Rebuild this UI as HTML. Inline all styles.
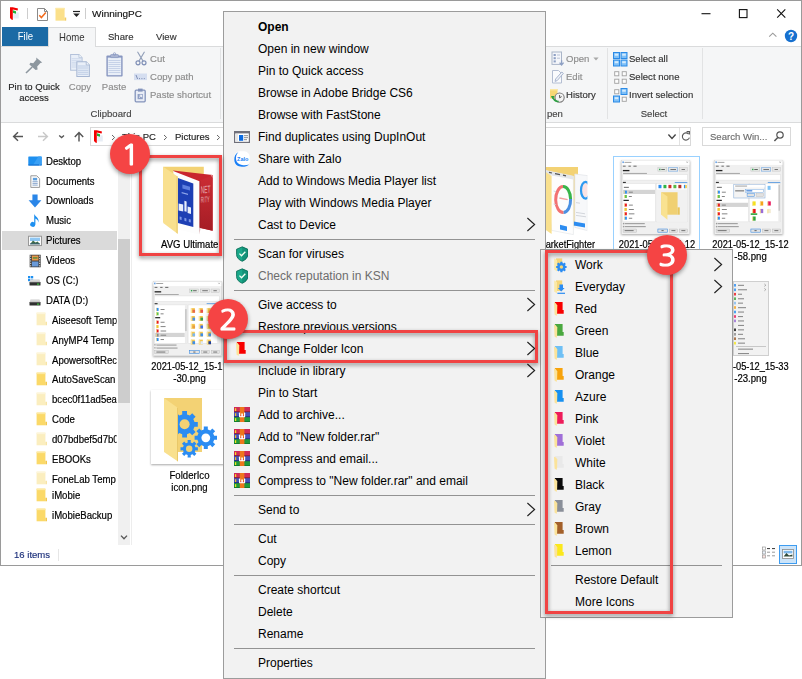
<!DOCTYPE html>
<html><head><meta charset="utf-8"><title>WinningPC</title>
<style>
*{box-sizing:border-box;margin:0;padding:0}
html,body{width:802px;height:679px;overflow:hidden;background:#fff}
body{position:relative;font-family:"Liberation Sans",sans-serif;font-size:9.6px;color:#222}
.abs{position:absolute}
.t{position:absolute;white-space:nowrap;line-height:12px;height:12px;margin-top:.1px;font-size:9.8px;transform:scaleX(.975);transform-origin:0 0;-webkit-text-stroke-width:.15px}
.c{transform-origin:50% 0 !important}
.fd{transform:scaleX(.893) !important}
.tab span{display:inline-block;font-size:10.4px;transform:scaleX(.923)}
.win{position:absolute;left:0;top:0;width:802px;height:566px;border:1px solid #9a9a9a;background:#fff}
.ribbon{position:absolute;left:1px;top:46px;width:800px;height:77px;background:#f5f6f7;border-top:1px solid #dadbdc;border-bottom:1px solid #dadbdc}
.filetab{position:absolute;left:2px;top:27px;width:46px;height:19px;background:#1b6aa5;color:#fff;text-align:center;line-height:20px;font-size:9.6px}
.hometab{position:absolute;left:48px;top:27px;width:48px;height:20px;background:#f5f6f7;border:1px solid #dadbdc;border-bottom:none;text-align:center;line-height:19px;font-size:9.6px;color:#333}
.gsep{position:absolute;top:48px;width:1px;height:71px;background:#e2e3e4}
.dis{color:#8c8c8c}
.menu{position:absolute;background:#f2f2f2;border:1px solid #9c9c9c;padding:4px 0;font-size:12px;color:#000}
.mi{position:relative;height:22px;line-height:23px;padding-left:34px;white-space:nowrap}
.ms{height:7px;position:relative}
.ms:after{content:"";position:absolute;left:10px;right:10px;top:3px;height:1px;background:#939393}
.mi svg.ic{position:absolute}
.mi .arr{position:absolute;right:9px;top:3px}
.sub .mi{padding-left:34px}
.sub .ms:after{left:10px;right:10px}
.rr{position:absolute;border:3px solid #f04343;filter:drop-shadow(0 2px 2px rgba(0,0,0,.45))}
.badge{position:absolute;width:40px;height:40px;border-radius:50%;background:#f54444;color:#fff;font-family:"NanumGothic","Liberation Sans",sans-serif;font-size:28px;line-height:42px;text-align:center;box-shadow:0 2px 4px rgba(0,0,0,.4);-webkit-text-stroke:1.2px #fff}
.badge span{display:inline-block;transform:scaleX(1.08)}
.sb{position:absolute;-webkit-text-stroke:.2px #000;left:46px;margin-top:1.1px;font-size:10.4px;color:#000;white-space:nowrap;line-height:12px;transform:scaleX(.923);transform-origin:0 0}
.sbf{position:absolute;-webkit-text-stroke:.2px #000;left:52px;margin-top:1.4px;font-size:10.4px;color:#000;white-space:nowrap;line-height:12px;width:70.4px;overflow:hidden;transform:scaleX(.923);transform-origin:0 0}
.fn{position:absolute;-webkit-text-stroke:.2px #000;margin-top:.6px;font-size:10.4px;color:#000;white-space:nowrap;line-height:12px;text-align:center;transform:scaleX(.923);transform-origin:50% 0}
</style></head>
<body>
<div class="win"></div>
<svg class="abs" style="left:9px;top:6px" width="12" height="15" viewBox="0 0 12 15">
<path d="M1 1.2 L3.8 1.2 L9 2.4 L8.6 4.4 L3.8 3.5 L3.8 13.9 L2.4 13.6 L1 12 Z" fill="#f30000"/>
<path d="M4 4.2 L7 5.3 L7 7.8 L4 6.9 Z" fill="#1fb33a"/>
<path d="M7.2 5.8 L9.8 6.8 L9.8 12.6 L4.2 12.4 L4.2 7.4 L7.2 8.2 Z" fill="#dfe7f1" opacity=".75"/>
</svg>
<div class="abs" style="left:27px;top:8px;width:1px;height:11px;background:#cdcdcd"></div>
<svg class="abs" style="left:36px;top:7px" width="13" height="15" viewBox="0 0 13 15">
<path d="M1.5 1.5 H8.5 L11.5 4.5 V13.5 H1.5 Z" fill="#fff" stroke="#8a8a8a" stroke-width="1"/>
<path d="M8.5 1.5 V4.5 H11.5" fill="none" stroke="#8a8a8a" stroke-width="1"/>
<path d="M3.3 8.2 L5.4 10.6 L9.8 5.6" fill="none" stroke="#f26a1b" stroke-width="1.5"/>
</svg>
<svg class="abs" style="left:55px;top:7px" width="12" height="15" viewBox="0 0 12 13.4" preserveAspectRatio="none">
<path d="M0.5 0.8 H9.6 V12.2 H0.5 Z" fill="#fbe08a"/>
<path d="M9.6 9.4 H11.2 V12.2 H9.6 Z" fill="#f3cd62"/>
<path d="M0.5 0.8 H9.6 V2 H0.5 Z" fill="#fde9a6"/>
</svg>
<svg class="abs" style="left:72px;top:10px" width="9" height="8" viewBox="0 0 9 8">
<path d="M1 1.5 H8" stroke="#222" stroke-width="1.2"/><path d="M1.2 3.6 H7.8 L4.5 7 Z" fill="#222"/></svg>
<div class="abs" style="left:85px;top:8px;width:1px;height:11px;background:#cdcdcd"></div>
<div class="t" style="left:92px;top:8px;color:#111;transform:scaleX(1.02)">WinningPC</div>
<svg class="abs" style="left:695px;top:5px" width="100" height="18" viewBox="0 0 100 18">
<path d="M6.5 8.7 H15.5" stroke="#111" stroke-width="1.1"/>
<rect x="44.4" y="4.6" width="7.6" height="8" fill="none" stroke="#111" stroke-width="1.1"/>
<path d="M82.2 4.3 L90.3 12.7 M90.3 4.3 L82.2 12.7" stroke="#111" stroke-width="1.1"/>
</svg>
<div class="ribbon"></div>
<div class="filetab tab"><span>File</span></div>
<div class="hometab tab"><span>Home</span></div>
<div class="t" style="left:108px;top:31px;color:#333">Share</div>
<div class="t" style="left:156px;top:31px;color:#333">View</div>
<svg class="abs" style="left:768px;top:31px" width="10" height="8" viewBox="0 0 10 8"><path d="M1.2 5.6 L4.8 2.2 L8.4 5.6" fill="none" stroke="#9a9a9a" stroke-width="1.1"/></svg>
<svg class="abs" style="left:784px;top:29px" width="14" height="14" viewBox="0 0 14 14"><circle cx="7" cy="7" r="6.2" fill="#1670cf"/>
<text x="7" y="10.6" font-family="Liberation Sans,sans-serif" font-size="10" font-weight="bold" fill="#fff" text-anchor="middle">?</text></svg>
<svg class="abs" style="left:24px;top:56px" width="20" height="19" viewBox="0 0 20 19">
<path d="M12.2 1.6 L18.2 6.4 L16.4 7 L13.2 10.6 L13.6 13.4 L11.6 14 L5.4 8.6 L6.4 6.8 L9.2 7.2 L12.4 3.6 Z" fill="#8d979f"/>
<path d="M8.2 11 L2 17" stroke="#8d979f" stroke-width="1.6"/></svg>
<div class="t c" style="left:0px;width:68px;top:81px;text-align:center;color:#1f1f1f">Pin to Quick</div>
<div class="t c" style="left:0px;width:68px;top:92px;text-align:center;color:#1f1f1f">access</div>
<svg class="abs" style="left:68.6px;top:52.8px" width="23" height="26" viewBox="0 0 22 25">
<path d="M1.5 1.5 H9.5 L12.5 4.5 V16.5 H1.5 Z" fill="#e9eff8" stroke="#b4c2da"/>
<path d="M9.5 1.5 V4.5 H12.5" fill="#f6f9fd" stroke="#b4c2da" stroke-width=".8"/>
<path d="M2.5 5.5 H11.5 M2.5 7.5 H11.5 M2.5 9.5 H11.5 M2.5 11.5 H11.5 M2.5 13.5 H11.5" stroke="#cbd7ea"/>
<path d="M7.5 8.5 H16.5 L19.5 11.5 V22.5 H7.5 Z" fill="#e9eff8" stroke="#a6b6d2"/>
<path d="M16.5 8.5 V11.5 H19.5" fill="#f6f9fd" stroke="#a6b6d2" stroke-width=".8"/>
<path d="M8.5 12.5 H18.5 M8.5 14.5 H18.5 M8.5 16.5 H18.5 M8.5 18.5 H18.5 M8.5 20.5 H18.5" stroke="#bccbe3"/>
</svg>
<div class="t c dis" style="left:60px;width:40px;top:81px;text-align:center">Copy</div>
<svg class="abs" style="left:105px;top:52px" width="19" height="26" viewBox="0 0 19 26">
<rect x="1.4" y="3.6" width="16.2" height="21" rx="1" fill="#8796c0"/>
<rect x="2.8" y="5.6" width="13.4" height="17.6" fill="#e9eff8"/>
<path d="M3.5 8.5 H15.5 M3.5 10.5 H15.5 M3.5 12.5 H15.5 M3.5 14.5 H15.5 M3.5 16.5 H15.5 M3.5 18.5 H15.5 M3.5 20.5 H15.5" stroke="#c6d2e8"/>
<rect x="5.6" y="2.6" width="7.8" height="3" rx=".6" fill="#aab5d2" stroke="#8796c0" stroke-width=".7"/>
<rect x="8.4" y="0.8" width="2.2" height="2.4" rx=".8" fill="none" stroke="#8796c0" stroke-width=".8"/>
</svg>
<div class="t c dis" style="left:94px;width:40px;top:81px;text-align:center">Paste</div>
<svg class="abs" style="left:135px;top:51px" width="12" height="15" viewBox="0 0 12 15">
<path d="M2.5 0.8 L8.2 10.4 M9.5 0.8 L3.8 10.4" stroke="#93a0b9" stroke-width="1.1" fill="none"/>
<circle cx="3" cy="11.8" r="2" fill="none" stroke="#7f8fb6" stroke-width="1.2"/><circle cx="9" cy="11.8" r="2" fill="none" stroke="#7f8fb6" stroke-width="1.2"/></svg>
<div class="t dis" style="left:150px;top:53px">Cut</div>
<svg class="abs" style="left:134px;top:73px" width="14" height="8" viewBox="0 0 14 8">
<rect x="0" y="0.5" width="13" height="6.6" fill="#d5def0"/><path d="M2 2 L3.6 6 M5 5.6 H6 M7.4 5.6 H8.4 M9.8 5.6 H10.8" stroke="#7f8fb6" stroke-width="1"/></svg>
<div class="t dis" style="left:150px;top:71px">Copy path</div>
<svg class="abs" style="left:134px;top:88px" width="13" height="15" viewBox="0 0 13 15">
<rect x="1.2" y="2.2" width="10" height="11.6" rx="1" fill="#e9edf6" stroke="#8393bb" stroke-width="1.3"/>
<rect x="4" y="0.6" width="4.6" height="3" fill="#8393bb"/>
<rect x="3.6" y="6" width="5.2" height="5.2" fill="#8f9fc4"/><path d="M5 9.6 L7.4 7.4 M5.6 7.2 H7.6 V9.2" stroke="#fff" stroke-width=".9" fill="none"/></svg>
<div class="t dis" style="left:150px;top:89px">Paste shortcut</div>
<div class="t c" style="left:2px;width:218px;text-align:center;top:108px;color:#444">Clipboard</div>
<div class="gsep" style="left:220px"></div>
<svg class="abs" style="left:551px;top:51px" width="14" height="16" viewBox="0 0 14 16">
<rect x="1" y="1" width="9.5" height="12.4" fill="#f4f6fa" stroke="#aab5c8"/>
<rect x="2.6" y="3" width="2.2" height="2" fill="#8ea0c4"/><rect x="2.6" y="6.2" width="2.2" height="2" fill="#8ea0c4"/><rect x="2.6" y="9.4" width="2.2" height="2" fill="#8ea0c4"/>
<path d="M6 4 H9 M6 7.2 H9" stroke="#b8c2d6"/>
<path d="M10.6 9.2 V13.2 M8.6 11.6 L10.6 14 L12.6 11.6" stroke="#8ea0c4" stroke-width="1.3" fill="none"/></svg>
<div class="t dis" style="left:566px;top:53px">Open</div>
<svg class="abs" style="left:593px;top:57px" width="6" height="4" viewBox="0 0 6 4"><path d="M0.4 0.4 H5.6 L3 3.4 Z" fill="#a8a8a8"/></svg>
<svg class="abs" style="left:551px;top:69px" width="14" height="16" viewBox="0 0 14 16">
<path d="M1.5 1.5 H7.5 L10.5 4.5 V14 H1.5 Z" fill="#fafbfd" stroke="#b4bed2"/>
<path d="M4 12.4 L4.6 10 L10.8 3 L12.4 4.4 L6.2 11.6 Z" fill="#eef1f7" stroke="#a2afc9" stroke-width=".9"/></svg>
<div class="t dis" style="left:566px;top:71px">Edit</div>
<svg class="abs" style="left:549px;top:87px" width="17" height="17" viewBox="0 0 17 17">
<path d="M1 2 H8.5 V11.5 H1 Z" fill="#f7d774"/><path d="M1 2 H8.5 V3.4 H1 Z" fill="#fbe7a1"/>
<circle cx="10.6" cy="10.6" r="4.6" fill="#f3f3f3" stroke="#7a7a7a" stroke-width="1.1"/>
<path d="M10.6 8 V10.8 L12.6 9.6" stroke="#555" stroke-width="1" fill="none"/>
<path d="M3.4 9.6 C5 13.6 8 14.6 9.6 14.4" stroke="#2ea043" stroke-width="1.6" fill="none"/><path d="M2 9 L5.6 9 L3.4 12 Z" fill="#2ea043"/></svg>
<div class="t" style="left:566px;top:89px;color:#333">History</div>
<div class="t" style="left:547px;top:108px;color:#444">pen</div>
<div class="gsep" style="left:607px"></div>
<svg class="abs" style="left:613px;top:52px" width="15" height="15" viewBox="0 0 15 15"><rect x="0.5" y="0.5" width="6" height="6" fill="#7fc0f7" stroke="#2b8ae6"/><rect x="1.7" y="1.7" width="3.6" height="2" fill="#d4ebfd"/><rect x="8" y="0.5" width="6" height="6" fill="#7fc0f7" stroke="#2b8ae6"/><rect x="9.2" y="1.7" width="3.6" height="2" fill="#d4ebfd"/><rect x="0.5" y="8" width="6" height="6" fill="#7fc0f7" stroke="#2b8ae6"/><rect x="1.7" y="9.2" width="3.6" height="2" fill="#d4ebfd"/><rect x="8" y="8" width="6" height="6" fill="#7fc0f7" stroke="#2b8ae6"/><rect x="9.2" y="9.2" width="3.6" height="2" fill="#d4ebfd"/></svg>
<div class="t" style="left:629px;top:53px;color:#333">Select all</div>
<svg class="abs" style="left:613px;top:70px" width="15" height="15" viewBox="0 0 15 15"><rect x="1.7" y="1.7" width="4.1" height="4.1" fill="#fdfdfd" stroke="#a0a0a0" stroke-width=".9"/><rect x="9.2" y="1.7" width="4.1" height="4.1" fill="#fdfdfd" stroke="#a0a0a0" stroke-width=".9"/><rect x="1.7" y="9.2" width="4.1" height="4.1" fill="#fdfdfd" stroke="#a0a0a0" stroke-width=".9"/><rect x="9.2" y="9.2" width="4.1" height="4.1" fill="#fdfdfd" stroke="#a0a0a0" stroke-width=".9"/></svg>
<div class="t" style="left:629px;top:71px;color:#333">Select none</div>
<svg class="abs" style="left:613px;top:88px" width="15" height="15" viewBox="0 0 15 15"><rect x="1.7" y="1.7" width="4.1" height="4.1" fill="#fdfdfd" stroke="#a0a0a0" stroke-width=".9"/><rect x="8" y="0.5" width="6" height="6" fill="#7fc0f7" stroke="#2b8ae6"/><rect x="9.2" y="1.7" width="3.6" height="2" fill="#d4ebfd"/><rect x="0.5" y="8" width="6" height="6" fill="#7fc0f7" stroke="#2b8ae6"/><rect x="1.7" y="9.2" width="3.6" height="2" fill="#d4ebfd"/><rect x="9.2" y="9.2" width="4.1" height="4.1" fill="#fdfdfd" stroke="#a0a0a0" stroke-width=".9"/></svg>
<div class="t" style="left:629px;top:89px;color:#333">Invert selection</div>
<div class="t c" style="left:624px;width:60px;text-align:center;top:108px;color:#444">Select</div>
<div class="gsep" style="left:702px"></div>
<svg class="abs" style="left:10px;top:129px" width="80" height="15" viewBox="0 0 80 15">
<path d="M4 7.5 H13 M8 3.2 L3.6 7.5 L8 11.8" fill="none" stroke="#555" stroke-width="1.45"/>
<path d="M28 7.5 H37 M33 3.2 L37.4 7.5 L33 11.8" fill="none" stroke="#c8c8c8" stroke-width="1.45"/>
<path d="M49.2 6.4 L51.6 8.6 L54 6.4" fill="none" stroke="#555" stroke-width="1.3"/>
<path d="M69 12.6 V3.8 M64.8 8 L69 3.6 L73.2 8" fill="none" stroke="#555" stroke-width="1.45"/>
</svg>
<div class="abs" style="left:90px;top:127px;width:601px;height:19px;border:1px solid #d9d9d9;background:#fff"></div>
<svg class="abs" style="left:93.4px;top:128.6px" width="12" height="15" viewBox="0 0 12 15">
<path d="M1 1.2 L3.8 1.2 L9 2.4 L8.6 4.4 L3.8 3.5 L3.8 13.9 L2.4 13.6 L1 12 Z" fill="#f30000"/>
<path d="M4 4.2 L7 5.3 L7 7.8 L4 6.9 Z" fill="#1fb33a"/>
<path d="M7.2 5.8 L9.8 6.8 L9.8 12.6 L4.2 12.4 L4.2 7.4 L7.2 8.2 Z" fill="#dfe7f1" opacity=".75"/>
</svg>
<svg class="abs" style="left:111px;top:134px" width="5" height="7" viewBox="0 0 5 7"><path d="M1 1 L3.6 3.5 L1 6" fill="none" stroke="#666" stroke-width="1"/></svg>
<div class="t" style="left:122px;top:131px;color:#222">This PC</div>
<svg class="abs" style="left:163px;top:134px" width="5" height="7" viewBox="0 0 5 7"><path d="M1 1 L3.6 3.5 L1 6" fill="none" stroke="#666" stroke-width="1"/></svg>
<div class="t" style="left:175px;top:131px;color:#222">Pictures</div>
<svg class="abs" style="left:216px;top:134px" width="5" height="7" viewBox="0 0 5 7"><path d="M1 1 L3.6 3.5 L1 6" fill="none" stroke="#666" stroke-width="1"/></svg>
<svg class="abs" style="left:667px;top:132px" width="10" height="9" viewBox="0 0 10 9"><path d="M1.4 2.6 L5 6.4 L8.6 2.6" fill="none" stroke="#444" stroke-width="1.4"/></svg>
<div class="abs" style="left:679px;top:128px;width:1px;height:17px;background:#e2e2e2"></div>
<svg class="abs" style="left:680px;top:130px" width="12" height="13" viewBox="0 0 12 13"><path d="M8.6 4 A3.6 3.6 0 1 0 9.4 7.6" fill="none" stroke="#555" stroke-width="1.1"/><path d="M6.6 1.6 H9.4 V4.6" fill="none" stroke="#555" stroke-width="1.1"/></svg>
<div class="abs" style="left:702px;top:127px;width:89px;height:19px;border:1px solid #d9d9d9;background:#fff"></div>
<div class="t" style="left:710px;top:131px;color:#6d6d6d">Search Win...</div>
<svg class="abs" style="left:773px;top:130px" width="12" height="13" viewBox="0 0 12 13"><circle cx="7" cy="5" r="3.2" fill="none" stroke="#555" stroke-width="1.2"/><path d="M4.8 7.4 L1.4 11" stroke="#555" stroke-width="1.5"/></svg>
<div class="abs" style="left:131px;top:147px;width:1px;height:398px;background:#ededed"></div>
<div class="abs" style="left:2px;top:231px;width:115px;height:19px;background:#dadada"></div>
<div class="abs" style="left:118px;top:147px;width:12px;height:398px;background:#f0f0f0"></div>
<div class="abs" style="left:118px;top:239px;width:12px;height:164px;background:#cdcdcd"></div>
<svg class="abs" style="left:120px;top:534px" width="8" height="7" viewBox="0 0 8 7"><path d="M1 1.6 L4 4.8 L7 1.6" fill="none" stroke="#555" stroke-width="1.3"/></svg>
<div class="sb" style="top:154.8px">Desktop</div>
<div class="sb" style="top:174.7px">Documents</div>
<div class="sb" style="top:194.3px">Downloads</div>
<div class="sb" style="top:214.0px">Music</div>
<div class="sb" style="top:234.1px">Pictures</div>
<div class="sb" style="top:254.1px">Videos</div>
<div class="sb" style="top:274.0px">OS (C:)</div>
<div class="sb" style="top:293.8px">DATA (D:)</div>
<svg class="abs" style="left:28px;top:156px" width="14" height="11" viewBox="0 0 14 11"><rect x="0.3" y="0.5" width="13.4" height="8.6" rx=".6" fill="#1e90f0"/><path d="M5 9 L10.4 0.5 H13.1 Q13.7 0.5 13.7 1.1 V9 Z" fill="#3aa0f5"/><rect x="0.3" y="8.2" width="13.4" height="1.6" rx=".5" fill="#1878d8"/><rect x="11" y="8.7" width="1.6" height=".7" fill="#9fd0fa"/></svg>
<svg class="abs" style="left:30px;top:174.6px" width="10.6" height="13.4" viewBox="0 0 11 14"><path d="M0.8 0.8 H7 L10 3.8 V13 H0.8 Z" fill="#fafafa" stroke="#8e8e8e" stroke-width=".9"/><rect x="3" y="3" width="4.4" height="2.6" fill="#5b9fe0"/><path d="M2.6 7 H8 M2.6 8.8 H8 M2.6 10.6 H8" stroke="#7a9cc8" stroke-width=".9"/></svg>
<svg class="abs" style="left:28px;top:194px" width="14" height="14" viewBox="0 0 14 14"><path d="M4.4 0.6 H9.6 V6.2 H13.4 L7 13.6 L0.6 6.2 H4.4 Z" fill="#2a86e8"/></svg>
<svg class="abs" style="left:30px;top:213px" width="11" height="15" viewBox="0 0 11 15"><path d="M4.2 0.8 C5 4 9.6 4.6 8.4 9.6 C8.4 6.6 6 6 5.4 5.4 V11.6 A2.6 2.4 0 1 1 4.2 9.4 Z" fill="#1e90f0"/></svg>
<svg class="abs" style="left:28px;top:235px" width="14" height="12" viewBox="0 0 14 12"><rect x="0.6" y="1.2" width="12.8" height="9.4" fill="#fff" stroke="#8a8a8a" stroke-width=".9"/><rect x="2" y="2.6" width="10" height="3.4" fill="#8fc7f3"/><path d="M2 9.2 L5 5.6 L7.6 7.6 L9.6 6.4 L12 9.2 Z" fill="#3d6a4a"/><rect x="2" y="8.4" width="10" height=".9" fill="#3b5d7a"/></svg>
<svg class="abs" style="left:29px;top:254px" width="12.4" height="14" viewBox="0 0 13 15"><rect x="0.6" y="0.8" width="11.8" height="13.4" fill="#3a3a3a"/><rect x="3" y="1.6" width="7" height="5.4" fill="#e8964a"/><rect x="3" y="8" width="7" height="5.4" fill="#6a9ad8"/><path d="M1.7 1.6 V13.6 M11.3 1.6 V13.6" stroke="#eee" stroke-width="1" stroke-dasharray="1.4 1.2"/><path d="M4 4.2 H9" stroke="#5a8f3c" stroke-width="1.6"/></svg>
<svg class="abs" style="left:28px;top:276px" width="6" height="6" viewBox="0 0 6 6"><rect x="0" y="0" width="2.3" height="2.3" fill="#1e90f0"/><rect x="2.9" y="0" width="2.3" height="2.3" fill="#1e90f0"/><rect x="0" y="2.9" width="2.3" height="2.3" fill="#1e90f0"/><rect x="2.9" y="2.9" width="2.3" height="2.3" fill="#1e90f0"/></svg>
<svg class="abs" style="left:29px;top:279.4px" width="12" height="7" viewBox="0 0 12 7"><path d="M1.6 0.4 H10.4 L11.4 3.4 H0.6 Z" fill="#c9c9c9"/><path d="M1.8 0.4 H10.2 L10.6 1.4 H1.4 Z" fill="#e6e6e6"/><rect x="0.5" y="3.2" width="11" height="3.3" rx=".5" fill="#303030"/><rect x="0.5" y="3.2" width="11" height=".8" fill="#5a5a5a"/><rect x="8" y="4.6" width="2.2" height="1" fill="#42e042"/></svg>
<svg class="abs" style="left:29px;top:299px" width="12" height="7" viewBox="0 0 12 7"><path d="M1.6 0.4 H10.4 L11.4 3.4 H0.6 Z" fill="#c9c9c9"/><path d="M1.8 0.4 H10.2 L10.6 1.4 H1.4 Z" fill="#e6e6e6"/><rect x="0.5" y="3.2" width="11" height="3.3" rx=".5" fill="#303030"/><rect x="0.5" y="3.2" width="11" height=".8" fill="#5a5a5a"/><rect x="8" y="4.6" width="2.2" height="1" fill="#42e042"/></svg>
<div class="sbf" style="top:313.5px">Aiseesoft Temp</div>
<svg class="abs" style="left:36px;top:312.4px" width="12" height="15" viewBox="0 0 12 14" preserveAspectRatio="none"><path d="M0.6 0.6 H9.4 V12.4 H0.6 Z" fill="#fbeebf"/><path d="M0.6 0.6 H9.4 V2 H0.6 Z" fill="#fdf5da"/><path d="M9.4 9.2 H11 V12.4 H9.4 Z" fill="#f7e4a6"/></svg>
<div class="sbf" style="top:333.4px">AnyMP4 Temp</div>
<svg class="abs" style="left:36px;top:332.3px" width="12" height="15" viewBox="0 0 12 14" preserveAspectRatio="none"><path d="M0.6 0.6 H9.4 V12.4 H0.6 Z" fill="#fbeebf"/><path d="M0.6 0.6 H9.4 V2 H0.6 Z" fill="#fdf5da"/><path d="M9.4 9.2 H11 V12.4 H9.4 Z" fill="#f7e4a6"/></svg>
<div class="sbf" style="top:353.2px">ApowersoftRec</div>
<svg class="abs" style="left:36px;top:352.1px" width="12" height="15" viewBox="0 0 12 14" preserveAspectRatio="none"><path d="M0.6 0.6 H9.4 V12.4 H0.6 Z" fill="#fbeebf"/><path d="M0.6 0.6 H9.4 V2 H0.6 Z" fill="#fdf5da"/><path d="M9.4 9.2 H11 V12.4 H9.4 Z" fill="#f7e4a6"/></svg>
<div class="sbf" style="top:372.9px">AutoSaveScan</div>
<svg class="abs" style="left:36px;top:371.8px" width="12" height="15" viewBox="0 0 12 14" preserveAspectRatio="none"><path d="M0.6 0.6 H9.4 V12.4 H0.6 Z" fill="#fbd968"/><path d="M0.6 0.6 H9.4 V2 H0.6 Z" fill="#fde9a0"/><path d="M9.4 9.2 H11 V12.4 H9.4 Z" fill="#f2c74e"/></svg>
<div class="sbf" style="top:392.8px">bcec0f11ad5ea</div>
<svg class="abs" style="left:36px;top:391.7px" width="12" height="15" viewBox="0 0 12 14" preserveAspectRatio="none"><path d="M0.6 0.6 H9.4 V12.4 H0.6 Z" fill="#fbeebf"/><path d="M0.6 0.6 H9.4 V2 H0.6 Z" fill="#fdf5da"/><path d="M9.4 9.2 H11 V12.4 H9.4 Z" fill="#f7e4a6"/></svg>
<div class="sbf" style="top:412.7px">Code</div>
<svg class="abs" style="left:36px;top:411.6px" width="12" height="15" viewBox="0 0 12 14" preserveAspectRatio="none"><path d="M0.6 0.6 H9.4 V12.4 H0.6 Z" fill="#fbd968"/><path d="M0.6 0.6 H9.4 V2 H0.6 Z" fill="#fde9a0"/><path d="M9.4 9.2 H11 V12.4 H9.4 Z" fill="#f2c74e"/></svg>
<div class="sbf" style="top:432.7px">d07bdbef5d7b0</div>
<svg class="abs" style="left:36px;top:431.6px" width="12" height="15" viewBox="0 0 12 14" preserveAspectRatio="none"><path d="M0.6 0.6 H9.4 V12.4 H0.6 Z" fill="#fbeebf"/><path d="M0.6 0.6 H9.4 V2 H0.6 Z" fill="#fdf5da"/><path d="M9.4 9.2 H11 V12.4 H9.4 Z" fill="#f7e4a6"/></svg>
<div class="sbf" style="top:452.4px">EBOOKs</div>
<svg class="abs" style="left:36px;top:451.3px" width="12" height="15" viewBox="0 0 12 14" preserveAspectRatio="none"><path d="M0.6 0.6 H9.4 V12.4 H0.6 Z" fill="#fbd968"/><path d="M0.6 0.6 H9.4 V2 H0.6 Z" fill="#fde9a0"/><path d="M9.4 9.2 H11 V12.4 H9.4 Z" fill="#f2c74e"/></svg>
<div class="sbf" style="top:472.3px">FoneLab Temp</div>
<svg class="abs" style="left:36px;top:471.2px" width="12" height="15" viewBox="0 0 12 14" preserveAspectRatio="none"><path d="M0.6 0.6 H9.4 V12.4 H0.6 Z" fill="#fbeebf"/><path d="M0.6 0.6 H9.4 V2 H0.6 Z" fill="#fdf5da"/><path d="M9.4 9.2 H11 V12.4 H9.4 Z" fill="#f7e4a6"/></svg>
<div class="sbf" style="top:489.0px">iMobie</div>
<svg class="abs" style="left:36px;top:487.9px" width="12" height="15" viewBox="0 0 12 14" preserveAspectRatio="none"><path d="M0.6 0.6 H9.4 V12.4 H0.6 Z" fill="#fbd968"/><path d="M0.6 0.6 H9.4 V2 H0.6 Z" fill="#fde9a0"/><path d="M9.4 9.2 H11 V12.4 H9.4 Z" fill="#f2c74e"/></svg>
<div class="sbf" style="top:508.9px">iMobieBackup</div>
<svg class="abs" style="left:36px;top:507.8px" width="12" height="15" viewBox="0 0 12 14" preserveAspectRatio="none"><path d="M0.6 0.6 H9.4 V12.4 H0.6 Z" fill="#fbd968"/><path d="M0.6 0.6 H9.4 V2 H0.6 Z" fill="#fde9a0"/><path d="M9.4 9.2 H11 V12.4 H9.4 Z" fill="#f2c74e"/></svg>
<div class="t" style="left:14px;top:549px;color:#1b2f7a">16 items</div>
<div class="abs" style="left:58px;top:549px;width:1px;height:12px;background:#e6e6e6"></div>
<svg class="abs" style="left:762px;top:546px" width="14" height="14" viewBox="0 0 14 14"><rect x="0.6" y="1" width="2.8" height="3" fill="#fff" stroke="#999" stroke-width=".7"/><rect x="0.6" y="5" width="2.8" height="3" fill="#eaf2fb" stroke="#999" stroke-width=".7"/><rect x="0.6" y="9" width="2.8" height="3" fill="#fbe3e0" stroke="#999" stroke-width=".7"/><path d="M5 2.6 H8 M10 2.6 H13" stroke="#333" stroke-width="1"/><path d="M5 6.2 H8 M10 6.2 H13 M5 9.8 H8 M10 9.8 H13" stroke="#9a9a9a" stroke-width="1"/></svg>
<div class="abs" style="left:779px;top:545px;width:18px;height:19px;border:1px solid #3e9cf0;background:#cce4f9"></div>
<svg class="abs" style="left:782px;top:549px" width="12" height="10" viewBox="0 0 12 10"><rect x="0.5" y="0.5" width="11" height="9" fill="#fff" stroke="#8a8a8a" stroke-width=".8"/><rect x="1.6" y="1.8" width="8.8" height="2.6" fill="#7fb8ea"/><path d="M1.6 7.6 L4.4 4 L7 6.4 L10.4 5.6 V7.6 Z" fill="#2f4a3a"/></svg>
<svg class="abs" style="left:160px;top:164px" width="56" height="74" viewBox="160 164 56 74">
<defs><linearGradient id="rg" x1="0" y1="0" x2="0" y2="1"><stop offset="0" stop-color="#cc2c34"/><stop offset="1" stop-color="#a51d25"/></linearGradient></defs>
<path d="M163.2 166.8 H203.8 V222 H163.2 Z" fill="#f3d274"/>
<path d="M173.2 170.4 L212.6 175 L212.6 230.7 L199.5 227.8 Z" fill="#c9252d"/>
<path d="M199.5 181 L212.6 175 L212.6 230.7 L199.5 227.8 Z" fill="url(#rg)"/>
<path d="M210.4 174.8 L212.6 175 L212.6 178 Z" fill="#e58a8e"/>
<g transform="translate(200.8 193.6) skewY(-6)" font-family="Liberation Sans,sans-serif" fill="#e6b0b3"><text x="0" y="0" font-size="10.4" textLength="9.6" lengthAdjust="spacingAndGlyphs">NET</text><text x="0" y="9.2" font-size="8.4" textLength="8.8" lengthAdjust="spacingAndGlyphs">RITY</text></g>
<path d="M173.2 171 L199.5 181.2 L199.5 234.6 L177.6 229.4 Z" fill="#fdfdfd"/>
<path d="M199.5 181.2 L200.4 181 L200.4 228 L199.5 234.6 Z" fill="#8e1a20" opacity=".5"/>
<path d="M177.9 178 L193.3 183.6 L193.3 227 L177.9 223 Z" fill="#1d3fb4"/>
<path d="M182.4 184.4 L190 186.8 L190 190.6 L182.4 188.4 Z" fill="#5f7fe0"/>
<path d="M181.6 192 L188 193.8 L188 195 L181.6 193.2 Z" fill="#8fa6ea"/>
<path d="M178.6 203.4 L183.2 204.6 L183.2 211.6 L178.6 210.4 Z M184.4 200.8 L186.6 201.4 L186.6 211.8 L184.4 211.2 Z M187.6 206.4 L191 207.4 L191 214 L187.6 213 Z" fill="#e8eefc"/>
<path d="M179.6 216.4 L181.6 217 L181.6 220 L179.6 219.4 Z M184.4 217.8 L186.4 218.4 L186.4 221.4 L184.4 220.8 Z M188.8 219 L190.8 219.6 L190.8 222.6 L188.8 222 Z" fill="#7f98e6"/>
<path d="M163.2 166.8 L177.6 176.6 L177.6 233.8 L163.2 223 Z" fill="#f9e08e"/>
<path d="M176.6 176 L177.6 176.6 L177.6 233.8 L176.6 233 Z" fill="#e9c869"/>
</svg>
<div class="fn" style="left:161px;top:238px;text-align:left;transform-origin:0 0">AVG Ultimate</div>
<svg class="abs" style="left:540px;top:164px" width="60" height="74" viewBox="540 164 60 74">
<path d="M540 167 H578 V226 H540 Z" fill="#f3d274"/>
<path d="M574.8 174 L587.4 175.6 L587.4 230.6 L574.8 227.4 Z" fill="#f7f8fa" stroke="#e1e4e8" stroke-width=".7"/>
<ellipse cx="585.6" cy="190.2" rx="4.6" ry="8.4" fill="#fbe3e3" stroke="#2e9af0" stroke-width="2.2"/>
<path d="M587.4 175.6 H592 V231 H587.4 Z" fill="#fff"/>
<path d="M576 202.6 L580 203.2 M576 212.4 L585 213.8 M576 215.4 L586 216.8" stroke="#c9cdd3" stroke-width=".8"/>
<path d="M573.6 221.6 L585 223.6 L585 227.6 L573.6 225.6 Z" fill="#2c8cf0"/>
<path d="M546 170.6 L573.4 176.2 L573.4 234.6 L551.6 230.4 Z" fill="#fdfdfd" stroke="#e4e6ea" stroke-width=".7"/>
<path d="M546 170.6 L573.4 176.2 L573.4 179.6 L546 174.4 Z" fill="#e3e6ea"/>
<path d="M549 172.4 L552 173 M555 173.6 L560 174.6 M563 175.2 L566 175.8" stroke="#555" stroke-width="1.2"/>
<path d="M563 186.6 A7.4 12.8 0 0 1 570.6 199" fill="none" stroke="#38b54a" stroke-width="3"/>
<path d="M570.6 199 A7.4 12.8 0 0 1 563.4 212.6" fill="none" stroke="#4a90e2" stroke-width="3"/>
<path d="M563.4 212.6 A7.4 12.8 0 0 1 563 186.6" fill="none" stroke="#f27272" stroke-width="3"/>
<path d="M559.4 198 L567.6 199.6" stroke="#f0a0a0" stroke-width="1.4"/>
<path d="M553.6 191 L556 191.6 M553.6 204 L556 204.6" stroke="#c9cdd3" stroke-width=".8"/>
<path d="M560 224.8 L567 226.4 L567 231 L560 229.4 Z" fill="#2c8cf0"/>
<path d="M540 168 L551.6 176 L551.6 234 L540 226 Z" fill="#f9e08e"/>
</svg>
<div class="fn" style="left:520.5px;top:238px;width:74px;text-align:right;transform-origin:100% 0;transform:scaleX(.89)">MarketFighter</div>
<div class="abs" style="left:613px;top:156px;width:87px;height:100px;border:1px solid #99d1ff;background:#fff"></div>
<svg class="abs" style="left:620.5px;top:159.6px;filter:drop-shadow(0.6px 1px 1px rgba(0,0,0,.35))" width="69.2" height="74.6" viewBox="0 0 69 75"><rect x="0" y="0" width="69" height="75" fill="#f0f0f0"/><rect x="0.25" y="0.25" width="68.5" height="74.5" fill="none" stroke="#cfcfcf" stroke-width=".5"/><rect x="0.5" y="0.5" width="68" height="4.4" fill="#fff"/><rect x="1.2" y="1.4" width="1.3" height="1.7" fill="#4a90e2"/><rect x="3.2" y="1.9" width="7" height=".9" fill="#9a9a9a"/><path d="M65.6 1.5 L67 2.9 M67 1.5 L65.6 2.9" stroke="#777" stroke-width=".4"/><rect x="1.6" y="5.7" width="2.8" height="1" fill="#666"/><rect x="7.2" y="5.7" width="2.4" height="1" fill="#666"/><rect x="12.2" y="5.7" width="3.2" height="1" fill="#666"/><rect x="1.6" y="10" width="6.6" height="1.3" fill="#222"/><rect x="36.8" y="7.8" width="9" height="3.4" fill="#e4e9e4" stroke="#bdbdbd" stroke-width=".4"/><rect x="38" y="8.8" width="1.4" height="1.4" fill="#2aa04a"/><rect x="40.2" y="9.1" width="3.6" height=".9" fill="#555"/><rect x="47.6" y="7.8" width="9.2" height="3.4" fill="#e6e6e6" stroke="#5a9be0" stroke-width=".5"/><rect x="49.4" y="9.1" width="5.6" height=".9" fill="#666"/><rect x="58.2" y="7.8" width="8.2" height="3.4" fill="#e6e6e6" stroke="#bdbdbd" stroke-width=".4"/><rect x="60.6" y="9.1" width="3.4" height=".9" fill="#666"/><rect x="1.8" y="13" width="24" height=".9" fill="#9c9c9c"/><rect x="1.6" y="14.8" width="64.8" height="5.4" fill="#fff" stroke="#dadada" stroke-width=".4"/><rect x="1.6" y="22" width="3" height="1.2" fill="#333"/><rect x="53.8" y="22.1" width="12.6" height=".9" fill="#5a9be0"/><rect x="1.6" y="23.8" width="32.6" height="38.4" fill="#fff" stroke="#dadada" stroke-width=".4"/><rect x="2.6" y="27.0" width="5" height=".9" fill="#555"/><rect x="1.8" y="30.0" width="32.2" height="4.2" fill="#d4d4d4"/><rect x="3.2" y="30.8" width="2.4" height="3" fill="#2a8cf0"/><rect x="3" y="31.0" width=".8" height="3" fill="#f5dc8a"/><rect x="7.6" y="31.900000000000002" width="4" height=".9" fill="#777"/><rect x="3.2" y="35.2" width="2.4" height="3" fill="#5fc24a"/><rect x="3" y="35.400000000000006" width=".8" height="3" fill="#f5dc8a"/><rect x="7.6" y="36.300000000000004" width="3" height=".9" fill="#777"/><rect x="2.2" y="40.0" width="5.4" height="1.2" fill="#222"/><rect x="3.2" y="43.8" width="2.4" height="3" fill="#e8131b"/><rect x="3" y="44.0" width=".8" height="3" fill="#f5dc8a"/><rect x="7.6" y="44.9" width="4" height=".9" fill="#777"/><rect x="3.2" y="48.2" width="2.4" height="3" fill="#f0c330"/><rect x="3" y="48.400000000000006" width=".8" height="3" fill="#f5dc8a"/><rect x="7.6" y="49.300000000000004" width="5" height=".9" fill="#777"/><rect x="3.2" y="52.6" width="2.4" height="3" fill="#e8131b"/><rect x="3" y="52.800000000000004" width=".8" height="3" fill="#f5dc8a"/><rect x="7.6" y="53.7" width="5.6" height=".9" fill="#777"/><rect x="3.2" y="57" width="2.4" height="3" fill="#2a8cf0"/><rect x="3" y="57.2" width=".8" height="3" fill="#f5dc8a"/><rect x="7.6" y="58.1" width="3.4" height=".9" fill="#777"/><rect x="35.2" y="23.8" width="31.2" height="38.4" fill="#fff" stroke="#dadada" stroke-width=".4"/><rect x="35.4" y="29.6" width="30.8" height="32.4" fill="#f1f1f1"/><rect x="37.4" y="25" width="3" height="3.4" fill="#2a8cf0"/><rect x="42.4" y="25" width="3" height="3.4" fill="#2fb344"/><rect x="47.4" y="25" width="3" height="3.4" fill="#d12b2b"/><rect x="52.4" y="25" width="3" height="3.4" fill="#58b947"/><rect x="57.4" y="25" width="3" height="3.4" fill="#b5332b"/><rect x="63" y="25" width="1.4" height="3.4" fill="#2a8cf0"/><rect x="64.4" y="25" width="1.4" height="3.4" fill="#f0c330"/><path d="M40.2 32.4 H56.6 V55 H40.2 Z" fill="#f0d072"/><path d="M56.6 47.6 H58.8 V55 H56.6 Z" fill="#e8c45c"/><path d="M40.2 32.4 L46.4 36.6 V60.2 L40.2 55 Z" fill="#f9e291"/><rect x="1.8" y="63.4" width="1.2" height="1.2" fill="#fff" stroke="#888" stroke-width=".3"/><rect x="3.6" y="63.6" width="20" height=".9" fill="#8a8a8a"/><rect x="1.8" y="66.4" width="1.2" height="1.2" fill="#fff" stroke="#888" stroke-width=".3"/><rect x="3.6" y="66.6" width="21" height=".9" fill="#8a8a8a"/><rect x="1.8" y="69.4" width="13.6" height="3.2" fill="#e3e3e3" stroke="#b5b5b5" stroke-width=".4"/><rect x="3.4" y="70.6" width="9" height=".9" fill="#666"/><rect x="36.8" y="69.4" width="9.6" height="3.2" fill="#e3e3e3" stroke="#3c8ae0" stroke-width=".6"/><rect x="40.4" y="70.6" width="2.2" height=".9" fill="#555"/><rect x="48.4" y="69.4" width="8" height="3.2" fill="#e3e3e3" stroke="#b5b5b5" stroke-width=".4"/><rect x="50.4" y="70.6" width="4" height=".9" fill="#666"/><rect x="58.4" y="69.4" width="8" height="3.2" fill="#e3e3e3" stroke="#b5b5b5" stroke-width=".4"/><rect x="60.4" y="70.6" width="4" height=".9" fill="#666"/></svg>
<div class="fn fd" style="left:607px;top:238px;width:100px">2021-05-12_15-12</div>
<svg class="abs" style="left:713.8px;top:159.6px;filter:drop-shadow(0.6px 1px 1px rgba(0,0,0,.35))" width="69.2" height="74.6" viewBox="0 0 69 75"><rect x="0" y="0" width="69" height="75" fill="#f0f0f0"/><rect x="0.25" y="0.25" width="68.5" height="74.5" fill="none" stroke="#cfcfcf" stroke-width=".5"/><rect x="0.5" y="0.5" width="68" height="4.4" fill="#fff"/><rect x="1.2" y="1.4" width="1.3" height="1.7" fill="#4a90e2"/><rect x="3.2" y="1.9" width="7" height=".9" fill="#9a9a9a"/><path d="M65.6 1.5 L67 2.9 M67 1.5 L65.6 2.9" stroke="#777" stroke-width=".4"/><rect x="1.6" y="5.7" width="2.8" height="1" fill="#666"/><rect x="7.2" y="5.7" width="2.4" height="1" fill="#666"/><rect x="12.2" y="5.7" width="3.2" height="1" fill="#666"/><rect x="1.6" y="10" width="6.6" height="1.3" fill="#222"/><rect x="36.8" y="7.8" width="9" height="3.4" fill="#e4e9e4" stroke="#bdbdbd" stroke-width=".4"/><rect x="38" y="8.8" width="1.4" height="1.4" fill="#2aa04a"/><rect x="40.2" y="9.1" width="3.6" height=".9" fill="#555"/><rect x="47.6" y="7.8" width="9.2" height="3.4" fill="#e6e6e6" stroke="#5a9be0" stroke-width=".5"/><rect x="49.4" y="9.1" width="5.6" height=".9" fill="#666"/><rect x="58.2" y="7.8" width="8.2" height="3.4" fill="#e6e6e6" stroke="#bdbdbd" stroke-width=".4"/><rect x="60.6" y="9.1" width="3.4" height=".9" fill="#666"/><rect x="1.8" y="13" width="24" height=".9" fill="#9c9c9c"/><rect x="1.6" y="14.8" width="64.8" height="5.4" fill="#fff" stroke="#dadada" stroke-width=".4"/><rect x="1.6" y="22" width="3" height="1.2" fill="#333"/><rect x="53.8" y="22.1" width="12.6" height=".9" fill="#5a9be0"/><rect x="1.6" y="23.8" width="32.6" height="38.4" fill="#fff" stroke="#dadada" stroke-width=".4"/><rect x="2.6" y="27.0" width="5" height=".9" fill="#555"/><rect x="3.2" y="30.8" width="2.4" height="3" fill="#2a8cf0"/><rect x="3" y="31.0" width=".8" height="3" fill="#f5dc8a"/><rect x="7.6" y="31.900000000000002" width="4" height=".9" fill="#777"/><rect x="3.2" y="35.2" width="2.4" height="3" fill="#5fc24a"/><rect x="3" y="35.400000000000006" width=".8" height="3" fill="#f5dc8a"/><rect x="7.6" y="36.300000000000004" width="3" height=".9" fill="#777"/><rect x="2.2" y="40.0" width="5.4" height="1.2" fill="#222"/><rect x="1.8" y="43.0" width="32.2" height="4.2" fill="#d4d4d4"/><rect x="3.2" y="43.8" width="2.4" height="3" fill="#e8131b"/><rect x="3" y="44.0" width=".8" height="3" fill="#f5dc8a"/><rect x="7.6" y="44.9" width="4" height=".9" fill="#777"/><rect x="3.2" y="48.2" width="2.4" height="3" fill="#f0c330"/><rect x="3" y="48.400000000000006" width=".8" height="3" fill="#f5dc8a"/><rect x="7.6" y="49.300000000000004" width="5" height=".9" fill="#777"/><rect x="3.2" y="52.6" width="2.4" height="3" fill="#e8131b"/><rect x="3" y="52.800000000000004" width=".8" height="3" fill="#f5dc8a"/><rect x="7.6" y="53.7" width="5.6" height=".9" fill="#777"/><rect x="3.2" y="57" width="2.4" height="3" fill="#2a8cf0"/><rect x="3" y="57.2" width=".8" height="3" fill="#f5dc8a"/><rect x="7.6" y="58.1" width="3.4" height=".9" fill="#777"/><rect x="35.2" y="23.8" width="31.2" height="38.4" fill="#fff" stroke="#dadada" stroke-width=".4"/><rect x="64.4" y="24" width="1.8" height="38" fill="#ececec"/><rect x="64.6" y="25" width="1.4" height="26" fill="#c6c6c6"/><rect x="19.6" y="24.6" width="31.4" height="13.6" fill="#f4f4f4" stroke="#8fb0d8" stroke-width=".6"/><rect x="20" y="25" width="30.6" height="2.6" fill="#fff"/><rect x="21" y="25.8" width="12" height=".8" fill="#888"/><rect x="21" y="30.6" width="9" height=".9" fill="#555"/><rect x="31.6" y="29.6" width="17.6" height="2.8" fill="#fff" stroke="#5a9be0" stroke-width=".4"/><rect x="32.2" y="30.4" width="6" height="1.2" fill="#3c7fd8"/><rect x="33" y="33.8" width="7.4" height="3" fill="#e1e1e1" stroke="#3c8ae0" stroke-width=".5"/><rect x="42" y="33.8" width="7.4" height="3" fill="#e1e1e1" stroke="#b5b5b5" stroke-width=".4"/><rect x="53.6" y="26" width="3" height="4" fill="#7fc3f5"/><rect x="38.6" y="41.6" width="3" height="4.2" fill="#f5e11c"/><rect x="38.2" y="41.9" width=".9" height="4.2" fill="#f5dc8a"/><rect x="46.2" y="41.6" width="3" height="4.2" fill="#f5a51c"/><rect x="45.800000000000004" y="41.9" width=".9" height="4.2" fill="#f5dc8a"/><rect x="53.8" y="41.6" width="3" height="4.2" fill="#e8135a"/><rect x="53.400000000000006" y="41.9" width=".9" height="4.2" fill="#f5dc8a"/><rect x="38.6" y="49.2" width="3" height="4.2" fill="#e8131b"/><rect x="38.2" y="49.5" width=".9" height="4.2" fill="#f5dc8a"/><rect x="46.2" y="49.2" width="3" height="4.2" fill="#9a6cd6"/><rect x="45.800000000000004" y="49.5" width=".9" height="4.2" fill="#f5dc8a"/><rect x="53.8" y="49.2" width="3" height="4.2" fill="#f2ead0"/><rect x="53.400000000000006" y="49.5" width=".9" height="4.2" fill="#f5dc8a"/><rect x="38.6" y="56.8" width="3" height="4.2" fill="#2fa33a"/><rect x="38.2" y="57.099999999999994" width=".9" height="4.2" fill="#f5dc8a"/><rect x="36.6" y="53.6" width="6.6" height="1.6" fill="#2fa33a"/><rect x="1.8" y="63.4" width="1.2" height="1.2" fill="#fff" stroke="#888" stroke-width=".3"/><rect x="3.6" y="63.6" width="20" height=".9" fill="#8a8a8a"/><rect x="1.8" y="66.4" width="1.2" height="1.2" fill="#fff" stroke="#888" stroke-width=".3"/><rect x="3.6" y="66.6" width="21" height=".9" fill="#8a8a8a"/><rect x="1.8" y="69.4" width="13.6" height="3.2" fill="#e3e3e3" stroke="#b5b5b5" stroke-width=".4"/><rect x="3.4" y="70.6" width="9" height=".9" fill="#666"/><rect x="36.8" y="69.4" width="9.6" height="3.2" fill="#e3e3e3" stroke="#3c8ae0" stroke-width=".6"/><rect x="40.4" y="70.6" width="2.2" height=".9" fill="#555"/><rect x="48.4" y="69.4" width="8" height="3.2" fill="#e3e3e3" stroke="#b5b5b5" stroke-width=".4"/><rect x="50.4" y="70.6" width="4" height=".9" fill="#666"/><rect x="58.4" y="69.4" width="8" height="3.2" fill="#e3e3e3" stroke="#b5b5b5" stroke-width=".4"/><rect x="60.4" y="70.6" width="4" height=".9" fill="#666"/></svg>
<div class="fn fd" style="left:700px;top:238px;width:101px">2021-05-12_15-12</div>
<div class="fn" style="left:710px;top:250px;width:81px">-58.png</div>
<svg class="abs" style="left:153.2px;top:281.2px;filter:drop-shadow(0.6px 1px 1px rgba(0,0,0,.35))" width="68.8" height="75.2" viewBox="0 0 69 75"><rect x="0" y="0" width="69" height="75" fill="#f0f0f0"/><rect x="0.25" y="0.25" width="68.5" height="74.5" fill="none" stroke="#cfcfcf" stroke-width=".5"/><rect x="0.5" y="0.5" width="68" height="4.4" fill="#fff"/><rect x="1.2" y="1.4" width="1.3" height="1.7" fill="#4a90e2"/><rect x="3.2" y="1.9" width="7" height=".9" fill="#9a9a9a"/><path d="M65.6 1.5 L67 2.9 M67 1.5 L65.6 2.9" stroke="#777" stroke-width=".4"/><rect x="1.6" y="5.7" width="2.8" height="1" fill="#666"/><rect x="7.2" y="5.7" width="2.4" height="1" fill="#666"/><rect x="12.2" y="5.7" width="3.2" height="1" fill="#666"/><rect x="1.6" y="10" width="6.6" height="1.3" fill="#222"/><rect x="36.8" y="7.8" width="9" height="3.4" fill="#e4e9e4" stroke="#bdbdbd" stroke-width=".4"/><rect x="38" y="8.8" width="1.4" height="1.4" fill="#2aa04a"/><rect x="40.2" y="9.1" width="3.6" height=".9" fill="#555"/><rect x="47.6" y="7.8" width="9.2" height="3.4" fill="#e6e6e6" stroke="#bdbdbd" stroke-width=".5"/><rect x="49.4" y="9.1" width="5.6" height=".9" fill="#666"/><rect x="58.2" y="7.8" width="8.2" height="3.4" fill="#e6e6e6" stroke="#bdbdbd" stroke-width=".4"/><rect x="60.6" y="9.1" width="3.4" height=".9" fill="#666"/><rect x="1.8" y="13" width="24" height=".9" fill="#9c9c9c"/><rect x="1.6" y="14.8" width="64.8" height="5.4" fill="#fff" stroke="#dadada" stroke-width=".4"/><rect x="1.6" y="22" width="3" height="1.2" fill="#333"/><rect x="53.8" y="22.1" width="12.6" height=".9" fill="#5a9be0"/><rect x="1.6" y="23.8" width="32.6" height="38.4" fill="#fff" stroke="#dadada" stroke-width=".4"/><rect x="32" y="24" width="2" height="38" fill="#ececec"/><rect x="32.2" y="28" width="1.6" height="22" fill="#c6c6c6"/><rect x="3.2" y="26.8" width="2.4" height="3" fill="#2a8cf0"/><rect x="3" y="27.0" width=".8" height="3" fill="#f5dc8a"/><rect x="7.6" y="27.900000000000002" width="4" height=".9" fill="#777"/><rect x="3.2" y="31.2" width="2.4" height="3" fill="#5fc24a"/><rect x="3" y="31.4" width=".8" height="3" fill="#f5dc8a"/><rect x="7.6" y="32.3" width="3" height=".9" fill="#777"/><rect x="2.2" y="36.0" width="5" height="1.2" fill="#222"/><rect x="3.2" y="39.6" width="2.4" height="3" fill="#e8131b"/><rect x="3" y="39.800000000000004" width=".8" height="3" fill="#f5dc8a"/><rect x="7.6" y="40.7" width="4" height=".9" fill="#777"/><rect x="3.2" y="44" width="2.4" height="3" fill="#f0c330"/><rect x="3" y="44.2" width=".8" height="3" fill="#f5dc8a"/><rect x="7.6" y="45.1" width="5" height=".9" fill="#777"/><rect x="3.2" y="48.4" width="2.4" height="3" fill="#e8131b"/><rect x="3" y="48.6" width=".8" height="3" fill="#f5dc8a"/><rect x="7.6" y="49.5" width="5.6" height=".9" fill="#777"/><rect x="1.8" y="51.800000000000004" width="30" height="4.2" fill="#d4d4d4"/><rect x="3.2" y="52.6" width="2.4" height="3" fill="#8a8a8a"/><rect x="3" y="52.800000000000004" width=".8" height="3" fill="#f5dc8a"/><rect x="7.6" y="53.7" width="5.6" height=".9" fill="#777"/><rect x="3.2" y="57" width="2.4" height="3" fill="#2a8cf0"/><rect x="3" y="57.2" width=".8" height="3" fill="#f5dc8a"/><rect x="7.6" y="58.1" width="3.4" height=".9" fill="#777"/><rect x="35.2" y="23.8" width="31.2" height="38.4" fill="#fff" stroke="#dadada" stroke-width=".4"/><rect x="38" y="27.0" width="4" height="4.8" fill="#f5c64c"/><rect x="38" y="27.0" width="1.2" height="4.8" fill="#fae39a"/><rect x="39.6" y="28.6" width="2.6" height="3" fill="#e86a4a"/><rect x="46" y="27.0" width="4" height="4.8" fill="#f5c64c"/><rect x="46" y="27.0" width="1.2" height="4.8" fill="#fae39a"/><rect x="47.6" y="28.6" width="2.6" height="3" fill="#e8504a"/><rect x="54" y="27.0" width="4" height="4.8" fill="#f5c64c"/><rect x="54" y="27.0" width="1.2" height="4.8" fill="#fae39a"/><rect x="55.6" y="28.6" width="2.6" height="3" fill="#f0b440"/><rect x="38" y="34.9" width="4" height="4.8" fill="#f5c64c"/><rect x="38" y="34.9" width="1.2" height="4.8" fill="#fae39a"/><rect x="39.6" y="36.5" width="2.6" height="3" fill="#4a90e2"/><rect x="46" y="34.9" width="4" height="4.8" fill="#f5c64c"/><rect x="46" y="34.9" width="1.2" height="4.8" fill="#fae39a"/><rect x="47.6" y="36.5" width="2.6" height="3" fill="#3a9a4a"/><rect x="54" y="34.9" width="4" height="4.8" fill="#f5c64c"/><rect x="54" y="34.9" width="1.2" height="4.8" fill="#fae39a"/><rect x="55.6" y="36.5" width="2.6" height="3" fill="#f0b440"/><rect x="38" y="42.8" width="4" height="4.8" fill="#f5c64c"/><rect x="38" y="42.8" width="1.2" height="4.8" fill="#fae39a"/><rect x="39.6" y="44.4" width="2.6" height="3" fill="#e8a040"/><rect x="46" y="42.8" width="4" height="4.8" fill="#f5c64c"/><rect x="46" y="42.8" width="1.2" height="4.8" fill="#fae39a"/><rect x="47.6" y="44.4" width="2.6" height="3" fill="#3f6fe8"/><rect x="54" y="42.8" width="4" height="4.8" fill="#f5c64c"/><rect x="54" y="42.8" width="1.2" height="4.8" fill="#fae39a"/><rect x="55.6" y="44.4" width="2.6" height="3" fill="#f0b440"/><rect x="38" y="50.7" width="4" height="4.8" fill="#f5c64c"/><rect x="38" y="50.7" width="1.2" height="4.8" fill="#fae39a"/><rect x="39.6" y="52.3" width="2.6" height="3" fill="#7ab8f0"/><rect x="46" y="50.7" width="4" height="4.8" fill="#f5c64c"/><rect x="46" y="50.7" width="1.2" height="4.8" fill="#fae39a"/><rect x="47.6" y="52.3" width="2.6" height="3" fill="#3f8fe8"/><rect x="54" y="50.7" width="4" height="4.8" fill="#f5c64c"/><rect x="54" y="50.7" width="1.2" height="4.8" fill="#fae39a"/><rect x="55.6" y="52.3" width="2.6" height="3" fill="#4a90e2"/><rect x="38" y="58.6" width="4" height="4.8" fill="#f5c64c"/><rect x="38" y="58.6" width="1.2" height="4.8" fill="#fae39a"/><rect x="39.6" y="60.2" width="2.6" height="3" fill="#3f8fe8"/><rect x="46" y="58.6" width="4" height="4.8" fill="#f5c64c"/><rect x="46" y="58.6" width="1.2" height="4.8" fill="#fae39a"/><rect x="47.6" y="60.2" width="2.6" height="3" fill="#dfeaf6"/><rect x="54" y="58.6" width="4" height="4.8" fill="#f5c64c"/><rect x="54" y="58.6" width="1.2" height="4.8" fill="#fae39a"/><rect x="55.6" y="60.2" width="2.6" height="3" fill="#1f3f9a"/><rect x="64.4" y="24" width="1.8" height="38" fill="#ececec"/><rect x="1.8" y="63.4" width="1.2" height="1.2" fill="#fff" stroke="#888" stroke-width=".3"/><rect x="3.6" y="63.6" width="20" height=".9" fill="#8a8a8a"/><rect x="1.8" y="66.4" width="1.2" height="1.2" fill="#fff" stroke="#888" stroke-width=".3"/><rect x="3.6" y="66.6" width="21" height=".9" fill="#8a8a8a"/><rect x="1.8" y="69.4" width="13.6" height="3.2" fill="#e3e3e3" stroke="#b5b5b5" stroke-width=".4"/><rect x="3.4" y="70.6" width="9" height=".9" fill="#666"/><rect x="36.8" y="69.4" width="9.6" height="3.2" fill="#e3e3e3" stroke="#3c8ae0" stroke-width=".6"/><rect x="40.4" y="70.6" width="2.2" height=".9" fill="#555"/><rect x="48.4" y="69.4" width="8" height="3.2" fill="#e3e3e3" stroke="#b5b5b5" stroke-width=".4"/><rect x="50.4" y="70.6" width="4" height=".9" fill="#666"/><rect x="58.4" y="69.4" width="8" height="3.2" fill="#e3e3e3" stroke="#b5b5b5" stroke-width=".4"/><rect x="60.4" y="70.6" width="4" height=".9" fill="#666"/></svg>
<div class="fn fd" style="left:139.4px;top:360px;width:101px">2021-05-12_15-12</div>
<div class="fn" style="left:149px;top:372px;width:81px">-30.png</div>
<svg class="abs" style="left:733px;top:281px" width="36" height="75" viewBox="0 0 36 75"><rect x="0.5" y="0.5" width="35" height="74" fill="#f2f2f2" stroke="#cfcfcf"/><rect x="1.2" y="3.0" width="1.6" height="2.6" fill="#2a8cf0"/><rect x="5" y="3.8" width="6" height="1.1" fill="#8c8c8c"/><rect x="1.2" y="7.5" width="1.6" height="2.6" fill="#2a8cf0"/><rect x="5" y="8.2" width="9" height="1.1" fill="#8c8c8c"/><rect x="1.2" y="11.9" width="1.6" height="2.6" fill="#e8131b"/><rect x="5" y="12.7" width="4" height="1.1" fill="#8c8c8c"/><rect x="1.2" y="16.4" width="1.6" height="2.6" fill="#3aa53a"/><rect x="5" y="17.2" width="6" height="1.1" fill="#8c8c8c"/><rect x="1.2" y="20.8" width="1.6" height="2.6" fill="#7db8f0"/><rect x="5" y="21.6" width="5" height="1.1" fill="#8c8c8c"/><rect x="1.2" y="25.2" width="1.6" height="2.6" fill="#f5a21c"/><rect x="5" y="26.1" width="8" height="1.1" fill="#8c8c8c"/><rect x="1.2" y="29.7" width="1.6" height="2.6" fill="#1e90f0"/><rect x="5" y="30.5" width="6" height="1.1" fill="#8c8c8c"/><rect x="1.2" y="34.2" width="1.6" height="2.6" fill="#e8135a"/><rect x="5" y="35.0" width="5" height="1.1" fill="#8c8c8c"/><rect x="1.2" y="38.6" width="1.6" height="2.6" fill="#9a6cd6"/><rect x="5" y="39.4" width="6" height="1.1" fill="#8c8c8c"/><rect x="1.2" y="43.1" width="1.6" height="2.6" fill="#eeeeee"/><rect x="5" y="43.9" width="6" height="1.1" fill="#8c8c8c"/><rect x="1.2" y="47.5" width="1.6" height="2.6" fill="#111"/><rect x="5" y="48.3" width="6" height="1.1" fill="#8c8c8c"/><rect x="1.2" y="52.0" width="1.6" height="2.6" fill="#8a8a8a"/><rect x="5" y="52.8" width="5" height="1.1" fill="#8c8c8c"/><rect x="1.2" y="56.4" width="1.6" height="2.6" fill="#9a5a2a"/><rect x="5" y="57.2" width="7" height="1.1" fill="#8c8c8c"/><rect x="1.2" y="60.9" width="1.6" height="2.6" fill="#f5e61c"/><rect x="5" y="61.6" width="7" height="1.1" fill="#8c8c8c"/><path d="M31.4 3 L32.8 4.2 L31.4 5.4 M31.4 7.4 L32.8 8.6 L31.4 9.8" stroke="#777" stroke-width=".6" fill="none"/><rect x="3" y="65" width="30" height=".6" fill="#aaa"/><rect x="5" y="67.6" width="15" height="1.1" fill="#8c8c8c"/><rect x="5" y="72" width="11" height="1.1" fill="#8c8c8c"/></svg>
<div class="fn fd" style="left:700px;top:360px;width:101px">2021-05-12_15-33</div>
<div class="fn" style="left:710px;top:372px;width:81px">-23.png</div>
<div class="abs" style="left:151px;top:390px;width:80px;height:74px;background:#fff;box-shadow:0 1px 2px rgba(0,0,0,.35)"></div>
<svg class="abs" style="left:160px;top:394px" width="62" height="70" viewBox="160 394 62 70"><path d="M164 398 H202 V452 H164 Z" fill="#f3d274"/><path d="M194.5 421.9 L197.8 421.9 L197.8 426.7 L194.5 426.7 L193.3 429.6 L195.6 431.9 L192.2 435.3 L189.9 433.0 L187.0 434.2 L187.0 437.5 L182.2 437.5 L182.2 434.2 L179.3 433.0 L177.0 435.3 L173.6 431.9 L175.9 429.6 L174.7 426.7 L171.4 426.7 L171.4 421.9 L174.7 421.9 L175.9 419.0 L173.6 416.7 L177.0 413.3 L179.3 415.6 L182.2 414.4 L182.2 411.1 L187.0 411.1 L187.0 414.4 L189.9 415.6 L192.2 413.3 L195.6 416.7 L193.3 419.0 Z" fill="#2b8cf2"/><circle cx="184.6" cy="424.3" r="5" fill="#f3d274"/><path d="M164 398 L178 408 L178 461.5 L164 452 Z" fill="#f9e08e"/><path d="M177 407.4 L178 408 L178 461.5 L177 460.8 Z" fill="#e9c869"/><path d="M214.2 435.8 L217.0 435.8 L217.0 439.8 L214.2 439.8 L213.1 442.3 L215.2 444.3 L212.3 447.2 L210.3 445.1 L207.8 446.2 L207.8 449.0 L203.8 449.0 L203.8 446.2 L201.3 445.1 L199.3 447.2 L196.4 444.3 L198.5 442.3 L197.4 439.8 L194.6 439.8 L194.6 435.8 L197.4 435.8 L198.5 433.3 L196.4 431.3 L199.3 428.4 L201.3 430.5 L203.8 429.4 L203.8 426.6 L207.8 426.6 L207.8 429.4 L210.3 430.5 L212.3 428.4 L215.2 431.3 L213.1 433.3 Z" fill="#2b8cf2"/><circle cx="205.8" cy="437.8" r="4.4" fill="#fff"/><path d="M195.4 447.3 L197.9 447.2 L197.9 450.4 L195.4 450.3 L194.7 452.1 L196.4 453.8 L194.2 456.0 L192.5 454.3 L190.7 455.0 L190.8 457.5 L187.6 457.5 L187.7 455.0 L185.9 454.3 L184.2 456.0 L182.0 453.8 L183.7 452.1 L183.0 450.3 L180.5 450.4 L180.5 447.2 L183.0 447.3 L183.7 445.5 L182.0 443.8 L184.2 441.6 L185.9 443.3 L187.7 442.6 L187.6 440.1 L190.8 440.1 L190.7 442.6 L192.5 443.3 L194.2 441.6 L196.4 443.8 L194.7 445.5 Z" fill="#2b8cf2"/><circle cx="189.2" cy="448.8" r="3.2" fill="#f3d274"/></svg>
<div class="fn" style="left:149px;top:469px;width:81px">FolderIco</div>
<div class="fn" style="left:149px;top:481.5px;width:81px">icon.png</div>
<div class="menu" style="left:223px;top:11px;width:323px;height:668px"><div class="mi"><b>Open</b></div><div class="mi">Open in new window</div><div class="mi">Pin to Quick access</div><div class="mi">Browse in Adobe Bridge CS6</div><div class="mi">Browse with FastStone</div><div class="mi"><svg class="ic" style="left:10px;top:5px" width="16" height="12" viewBox="0 0 16 12"><rect x="0.6" y="0.6" width="14.8" height="10.8" fill="#fff" stroke="#70707a" stroke-width="1.2"/><rect x="0" y="0" width="16" height="2.4" fill="#70707a"/><rect x="1.4" y="3" width="2.6" height="7.6" fill="#e6e6e6"/><rect x="5" y="4" width="4.2" height="5.8" fill="#0d6be0"/><path d="M10 4.7 H14 M10 6.7 H14 M10 8.7 H13" stroke="#8a8a8a" stroke-width="1"/></svg>Find duplicates using DupInOut</div><div class="mi"><svg class="ic" style="left:10px;top:3px" width="16" height="16" viewBox="0 0 16 16"><rect x="0.3" y="0.3" width="15.4" height="15.4" rx="5.4" fill="#fff"/><path d="M4.4 0.9 C1.4 2.6 0.1 5.4 0.3 9 C0.5 13.2 3.4 15.7 8 15.7 C11.4 15.7 13.6 15 15 13.4 C13 14.2 10.4 14.4 8 14 C4.4 13.4 2.2 11.2 2 8 C1.8 5 2.8 2.6 4.4 0.9 Z" fill="#1a7ff5"/><text x="8.7" y="10" font-family="Liberation Sans,sans-serif" font-size="5.8" font-weight="bold" fill="#1a7ff5" text-anchor="middle" textLength="11.4" lengthAdjust="spacingAndGlyphs">Zalo</text></svg>Share with Zalo</div><div class="mi">Add to Windows Media Player list</div><div class="mi">Play with Windows Media Player</div><div class="mi">Cast to Device<svg class="arr" width="9" height="15" viewBox="0 0 9 15"><path d="M0.4 1 L7.6 7.5 L0.4 14" fill="none" stroke="#222" stroke-width="1.15"/></svg></div><div class="ms"></div><div class="mi"><svg class="ic" style="left:12px;top:3px" width="12.4" height="16" viewBox="0 0 13 16"><path d="M6.5 0.5 L12.4 3 V8.6 C12.4 12 9.6 14.4 6.5 15.6 C3.4 14.4 0.6 12 0.6 8.6 V3 Z" fill="#1aa88a"/><path d="M6.5 0.5 L12.4 3 V8.6 C12.4 12 9.6 14.4 6.5 15.6 Z" fill="#14937a"/><path d="M6.5 0.5 L12.4 3 V8.6 C12.4 12 9.6 14.4 6.5 15.6 C3.4 14.4 0.6 12 0.6 8.6 V3 Z" fill="none" stroke="#0b6e58" stroke-width=".9"/><path d="M3.6 7.6 L5.8 9.8 L9.8 5.6" fill="none" stroke="#f4fff4" stroke-width="1.4"/></svg>Scan for viruses</div><div class="mi"><svg class="ic" style="left:12px;top:3px" width="12.4" height="16" viewBox="0 0 13 16"><path d="M6.5 0.5 L12.4 3 V8.6 C12.4 12 9.6 14.4 6.5 15.6 C3.4 14.4 0.6 12 0.6 8.6 V3 Z" fill="#1aa88a"/><path d="M6.5 0.5 L12.4 3 V8.6 C12.4 12 9.6 14.4 6.5 15.6 Z" fill="#14937a"/><path d="M6.5 0.5 L12.4 3 V8.6 C12.4 12 9.6 14.4 6.5 15.6 C3.4 14.4 0.6 12 0.6 8.6 V3 Z" fill="none" stroke="#0b6e58" stroke-width=".9"/><path d="M3.6 7.6 L5.8 9.8 L9.8 5.6" fill="none" stroke="#f4fff4" stroke-width="1.4"/></svg><span style='color:#6d6d6d'>Check reputation in KSN</span></div><div class="ms"></div><div class="mi">Give access to<svg class="arr" width="9" height="15" viewBox="0 0 9 15"><path d="M0.4 1 L7.6 7.5 L0.4 14" fill="none" stroke="#222" stroke-width="1.15"/></svg></div><div class="mi">Restore previous versions</div><div class="mi"><svg class="ic" style="left:12.4px;top:4px" width="11" height="15" viewBox="0 0 11 15"><path d="M0.6 0 H8.6 V8 H9.7 V11.8 H2.4 V3 Z" fill="#f80000"/><path d="M0 0.8 L2 1.6 L3.3 3.4 L3.1 11.4 L2.5 14 L0.6 12.4 Z" fill="#fbe39a"/></svg>Change Folder Icon<svg class="arr" width="9" height="15" viewBox="0 0 9 15"><path d="M0.4 1 L7.6 7.5 L0.4 14" fill="none" stroke="#222" stroke-width="1.15"/></svg></div><div class="mi">Include in library<svg class="arr" width="9" height="15" viewBox="0 0 9 15"><path d="M0.4 1 L7.6 7.5 L0.4 14" fill="none" stroke="#222" stroke-width="1.15"/></svg></div><div class="mi">Pin to Start</div><div class="mi"><svg class="ic" style="left:10px;top:3px" width="16.2" height="15.2" viewBox="0 0 16.2 15.2"><rect x="0" y="0" width="16.2" height="5.2" fill="#cf2b57"/><rect x="0" y="5" width="16.2" height="5.2" fill="#4450b8"/><rect x="0" y="10" width="16.2" height="5.2" fill="#1f9a3c"/><rect x="0" y="4.3" width="16.2" height=".9" fill="#7a1f3a"/><rect x="0" y="9.3" width="16.2" height=".9" fill="#1f2a78"/><rect x="0" y="14.4" width="16.2" height=".8" fill="#0f6a25"/><rect x="5.8" y="0" width="4.6" height="15.2" fill="#ee761c"/><rect x="5" y="5.4" width="6.2" height="4.8" rx=".8" fill="#fff"/><path d="M6.2 5 V8.2 H7.3 V6.6 H8.9 V8.2 H10 V5 Z" fill="#ee761c"/><rect x="6.2" y="8.2" width="1.1" height="1" fill="#d8281c"/><rect x="8.9" y="8.2" width="1.1" height="1" fill="#d8281c"/><rect x="1" y="1.2" width="1.2" height="2.8" fill="#f7e020"/><rect x="1" y="6.2" width="1.2" height="2.8" fill="#f5c020"/><rect x="1" y="11.2" width="1.2" height="2.8" fill="#f7e020"/></svg>Add to archive...</div><div class="mi"><svg class="ic" style="left:10px;top:3px" width="16.2" height="15.2" viewBox="0 0 16.2 15.2"><rect x="0" y="0" width="16.2" height="5.2" fill="#cf2b57"/><rect x="0" y="5" width="16.2" height="5.2" fill="#4450b8"/><rect x="0" y="10" width="16.2" height="5.2" fill="#1f9a3c"/><rect x="0" y="4.3" width="16.2" height=".9" fill="#7a1f3a"/><rect x="0" y="9.3" width="16.2" height=".9" fill="#1f2a78"/><rect x="0" y="14.4" width="16.2" height=".8" fill="#0f6a25"/><rect x="5.8" y="0" width="4.6" height="15.2" fill="#ee761c"/><rect x="5" y="5.4" width="6.2" height="4.8" rx=".8" fill="#fff"/><path d="M6.2 5 V8.2 H7.3 V6.6 H8.9 V8.2 H10 V5 Z" fill="#ee761c"/><rect x="6.2" y="8.2" width="1.1" height="1" fill="#d8281c"/><rect x="8.9" y="8.2" width="1.1" height="1" fill="#d8281c"/><rect x="1" y="1.2" width="1.2" height="2.8" fill="#f7e020"/><rect x="1" y="6.2" width="1.2" height="2.8" fill="#f5c020"/><rect x="1" y="11.2" width="1.2" height="2.8" fill="#f7e020"/></svg>Add to "New folder.rar"</div><div class="mi"><svg class="ic" style="left:10px;top:3px" width="16.2" height="15.2" viewBox="0 0 16.2 15.2"><rect x="0" y="0" width="16.2" height="5.2" fill="#cf2b57"/><rect x="0" y="5" width="16.2" height="5.2" fill="#4450b8"/><rect x="0" y="10" width="16.2" height="5.2" fill="#1f9a3c"/><rect x="0" y="4.3" width="16.2" height=".9" fill="#7a1f3a"/><rect x="0" y="9.3" width="16.2" height=".9" fill="#1f2a78"/><rect x="0" y="14.4" width="16.2" height=".8" fill="#0f6a25"/><rect x="5.8" y="0" width="4.6" height="15.2" fill="#ee761c"/><rect x="5" y="5.4" width="6.2" height="4.8" rx=".8" fill="#fff"/><path d="M6.2 5 V8.2 H7.3 V6.6 H8.9 V8.2 H10 V5 Z" fill="#ee761c"/><rect x="6.2" y="8.2" width="1.1" height="1" fill="#d8281c"/><rect x="8.9" y="8.2" width="1.1" height="1" fill="#d8281c"/><rect x="1" y="1.2" width="1.2" height="2.8" fill="#f7e020"/><rect x="1" y="6.2" width="1.2" height="2.8" fill="#f5c020"/><rect x="1" y="11.2" width="1.2" height="2.8" fill="#f7e020"/></svg>Compress and email...</div><div class="mi"><svg class="ic" style="left:10px;top:3px" width="16.2" height="15.2" viewBox="0 0 16.2 15.2"><rect x="0" y="0" width="16.2" height="5.2" fill="#cf2b57"/><rect x="0" y="5" width="16.2" height="5.2" fill="#4450b8"/><rect x="0" y="10" width="16.2" height="5.2" fill="#1f9a3c"/><rect x="0" y="4.3" width="16.2" height=".9" fill="#7a1f3a"/><rect x="0" y="9.3" width="16.2" height=".9" fill="#1f2a78"/><rect x="0" y="14.4" width="16.2" height=".8" fill="#0f6a25"/><rect x="5.8" y="0" width="4.6" height="15.2" fill="#ee761c"/><rect x="5" y="5.4" width="6.2" height="4.8" rx=".8" fill="#fff"/><path d="M6.2 5 V8.2 H7.3 V6.6 H8.9 V8.2 H10 V5 Z" fill="#ee761c"/><rect x="6.2" y="8.2" width="1.1" height="1" fill="#d8281c"/><rect x="8.9" y="8.2" width="1.1" height="1" fill="#d8281c"/><rect x="1" y="1.2" width="1.2" height="2.8" fill="#f7e020"/><rect x="1" y="6.2" width="1.2" height="2.8" fill="#f5c020"/><rect x="1" y="11.2" width="1.2" height="2.8" fill="#f7e020"/></svg>Compress to "New folder.rar" and email</div><div class="ms"></div><div class="mi">Send to<svg class="arr" width="9" height="15" viewBox="0 0 9 15"><path d="M0.4 1 L7.6 7.5 L0.4 14" fill="none" stroke="#222" stroke-width="1.15"/></svg></div><div class="ms"></div><div class="mi">Cut</div><div class="mi">Copy</div><div class="ms"></div><div class="mi">Create shortcut</div><div class="mi">Delete</div><div class="mi">Rename</div><div class="ms"></div><div class="mi">Properties</div></div>
<div class="menu sub" style="left:540px;top:249px;width:193px;height:369px"><div class="mi"><svg class="ic" style="left:13px;top:4px" width="14" height="15" viewBox="0 0 14 15"><path d="M2 0.4 H8.2 V11 H2 Z" fill="#f5d679"/><path d="M0.2 0.6 L3 2 V13.4 L0.2 11.6 Z" fill="#fbe9a6"/><path d="M11.5 7.9 L12.6 7.9 L12.6 10.1 L11.5 10.1 L11.0 11.1 L11.9 11.9 L10.3 13.5 L9.5 12.6 L8.5 13.1 L8.5 14.2 L6.3 14.2 L6.3 13.1 L5.3 12.6 L4.5 13.5 L2.9 11.9 L3.8 11.1 L3.3 10.1 L2.2 10.1 L2.2 7.9 L3.3 7.9 L3.8 6.9 L2.9 6.1 L4.5 4.5 L5.3 5.4 L6.3 4.9 L6.3 3.8 L8.5 3.8 L8.5 4.9 L9.5 5.4 L10.3 4.5 L11.9 6.1 L11.0 6.9 Z" fill="#2b8cf2"/><circle cx="7.4" cy="9" r="1.7" fill="#f7d774"/></svg>Work<svg class="arr" width="9" height="15" viewBox="0 0 9 15"><path d="M0.4 1 L7.6 7.5 L0.4 14" fill="none" stroke="#222" stroke-width="1.15"/></svg></div><div class="mi"><svg class="ic" style="left:13px;top:4px" width="14" height="15" viewBox="0 0 14 15"><path d="M2 0.4 H8.2 V11 H2 Z" fill="#f5d679"/><path d="M0.2 0.6 L3 2 V13.4 L0.2 11.6 Z" fill="#fbe9a6"/><path d="M5.4 4.6 H9 V8 H10.6 L7.2 11.6 L3.8 8 H5.4 Z" fill="#2b8cf2"/><rect x="3.4" y="12.7" width="7.6" height="1.2" fill="#2b8cf2"/></svg>Everyday<svg class="arr" width="9" height="15" viewBox="0 0 9 15"><path d="M0.4 1 L7.6 7.5 L0.4 14" fill="none" stroke="#222" stroke-width="1.15"/></svg></div><div class="mi"><svg class="ic" style="left:12.6px;top:4px" width="11" height="15" viewBox="0 0 11 15"><path d="M0.6 0 H8.6 V8 H9.7 V11.8 H2.4 V3 Z" fill="#f80000"/><path d="M0 0.8 L2 1.6 L3.3 3.4 L3.1 11.4 L2.5 14 L0.6 12.4 Z" fill="#fbe39a"/></svg>Red</div><div class="mi"><svg class="ic" style="left:12.6px;top:4px" width="11" height="15" viewBox="0 0 11 15"><path d="M0.6 0 H8.6 V8 H9.7 V11.8 H2.4 V3 Z" fill="#4aa83f"/><path d="M0 0.8 L2 1.6 L3.3 3.4 L3.1 11.4 L2.5 14 L0.6 12.4 Z" fill="#fbe39a"/></svg>Green</div><div class="mi"><svg class="ic" style="left:12.6px;top:4px" width="11" height="15" viewBox="0 0 11 15"><path d="M0.6 0 H8.6 V8 H9.7 V11.8 H2.4 V3 Z" fill="#6fc0f5"/><path d="M0 0.8 L2 1.6 L3.3 3.4 L3.1 11.4 L2.5 14 L0.6 12.4 Z" fill="#fbe39a"/></svg>Blue</div><div class="mi"><svg class="ic" style="left:12.6px;top:4px" width="11" height="15" viewBox="0 0 11 15"><path d="M0.6 0 H8.6 V8 H9.7 V11.8 H2.4 V3 Z" fill="#f7a30c"/><path d="M0 0.8 L2 1.6 L3.3 3.4 L3.1 11.4 L2.5 14 L0.6 12.4 Z" fill="#fbe39a"/></svg>Orange</div><div class="mi"><svg class="ic" style="left:12.6px;top:4px" width="11" height="15" viewBox="0 0 11 15"><path d="M0.6 0 H8.6 V8 H9.7 V11.8 H2.4 V3 Z" fill="#1790f0"/><path d="M0 0.8 L2 1.6 L3.3 3.4 L3.1 11.4 L2.5 14 L0.6 12.4 Z" fill="#fbe39a"/></svg>Azure</div><div class="mi"><svg class="ic" style="left:12.6px;top:4px" width="11" height="15" viewBox="0 0 11 15"><path d="M0.6 0 H8.6 V8 H9.7 V11.8 H2.4 V3 Z" fill="#ee1c5a"/><path d="M0 0.8 L2 1.6 L3.3 3.4 L3.1 11.4 L2.5 14 L0.6 12.4 Z" fill="#fbe39a"/></svg>Pink</div><div class="mi"><svg class="ic" style="left:12.6px;top:4px" width="11" height="15" viewBox="0 0 11 15"><path d="M0.6 0 H8.6 V8 H9.7 V11.8 H2.4 V3 Z" fill="#a06fd8"/><path d="M0 0.8 L2 1.6 L3.3 3.4 L3.1 11.4 L2.5 14 L0.6 12.4 Z" fill="#fbe39a"/></svg>Violet</div><div class="mi"><svg class="ic" style="left:12.6px;top:4px" width="11" height="15" viewBox="0 0 11 15"><path d="M0.6 0 H8.6 V8 H9.7 V11.8 H2.4 V3 Z" fill="#e9e9e9"/><path d="M0 0.8 L2 1.6 L3.3 3.4 L3.1 11.4 L2.5 14 L0.6 12.4 Z" fill="#fbe39a"/></svg>White</div><div class="mi"><svg class="ic" style="left:12.6px;top:4px" width="11" height="15" viewBox="0 0 11 15"><path d="M0.6 0 H8.6 V8 H9.7 V11.8 H2.4 V3 Z" fill="#0a0a0a"/><path d="M0 0.8 L2 1.6 L3.3 3.4 L3.1 11.4 L2.5 14 L0.6 12.4 Z" fill="#fbe39a"/></svg>Black</div><div class="mi"><svg class="ic" style="left:12.6px;top:4px" width="11" height="15" viewBox="0 0 11 15"><path d="M0.6 0 H8.6 V8 H9.7 V11.8 H2.4 V3 Z" fill="#8a8f99"/><path d="M0 0.8 L2 1.6 L3.3 3.4 L3.1 11.4 L2.5 14 L0.6 12.4 Z" fill="#fbe39a"/></svg>Gray</div><div class="mi"><svg class="ic" style="left:12.6px;top:4px" width="11" height="15" viewBox="0 0 11 15"><path d="M0.6 0 H8.6 V8 H9.7 V11.8 H2.4 V3 Z" fill="#a3602a"/><path d="M0 0.8 L2 1.6 L3.3 3.4 L3.1 11.4 L2.5 14 L0.6 12.4 Z" fill="#fbe39a"/></svg>Brown</div><div class="mi"><svg class="ic" style="left:12.6px;top:4px" width="11" height="15" viewBox="0 0 11 15"><path d="M0.6 0 H8.6 V8 H9.7 V11.8 H2.4 V3 Z" fill="#fbe81c"/><path d="M0 0.8 L2 1.6 L3.3 3.4 L3.1 11.4 L2.5 14 L0.6 12.4 Z" fill="#fbe39a"/></svg>Lemon</div><div class="ms"></div><div class="mi">Restore Default</div><div class="mi">More Icons</div></div>
<div class="rr" style="left:139px;top:155px;width:83px;height:101px"></div>
<div class="rr" style="left:224px;top:330px;width:314px;height:33px"></div>
<div class="rr" style="left:545px;top:250px;width:128px;height:364px"></div>
<div class="badge" style="left:110px;top:134px"><span>1</span></div>
<div class="badge" style="left:208px;top:299px"><span>2</span></div>
<div class="badge" style="left:647px;top:235px"><span>3</span></div>
</body></html>
